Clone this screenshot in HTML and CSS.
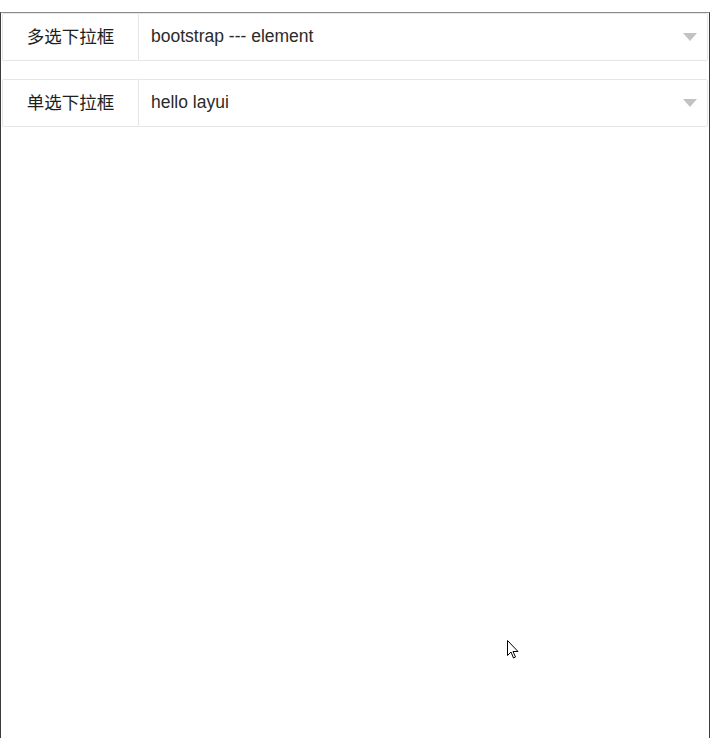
FILE: index.html
```html
<!DOCTYPE html>
<html lang="zh-CN">
<head>
<meta charset="utf-8">
<title>select</title>
<link rel="stylesheet" href="styles.css">
</head>
<body>
<div class="frame">
  <form class="form">
    <div class="item">
      <label class="label">多选下拉框</label>
      <div class="select">
        <span class="value">bootstrap --- element</span>
        <i class="edge"></i>
      </div>
    </div>
    <div class="item">
      <label class="label">单选下拉框</label>
      <div class="select">
        <span class="value">hello layui</span>
        <i class="edge"></i>
      </div>
    </div>
  </form>
  <svg class="cursor" width="13" height="20" viewBox="0 0 13 20" xmlns="http://www.w3.org/2000/svg">
    <path d="M0.5 0.5 L0.5 15.5 L4 12 L6.5 18 L8.5 17 L6 11.5 L11 11.5 Z" fill="#fff" stroke="#000" stroke-width="1" stroke-linejoin="miter"/>
  </svg>
</div>
</body>
</html>
```
FILE: styles.css
```css
html, body {
  margin: 0;
  padding: 0;
  background: #fff;
}
body {
  width: 712px;
  height: 738px;
  overflow: hidden;
  font-family: "Liberation Sans", "Noto Sans CJK SC", sans-serif;
}
.frame {
  position: relative;
  box-sizing: border-box;
  margin-top: 12px;
  width: 710px;
  height: 726px;
  border-top: 1px solid #8a8a8a;
  border-left: 1px solid #3c3c3c;
  border-right: 1px solid #3c3c3c;
  background: #fff;
}
.form {
  display: flex;
  flex-direction: column;
  gap: 18px;
  padding: 0 1px;
}
.item {
  display: flex;
  height: 48px;
}
.label {
  box-sizing: border-box;
  width: 136px;
  padding-bottom: 3px;
  border: 1px solid #e6e6e6;
  border-right: none;
  border-radius: 2px 0 0 2px;
  display: flex;
  align-items: center;
  justify-content: center;
  font-size: 17.5px;
  color: #1e1e1e;
  background: #fff;
}
.select {
  position: relative;
  flex: 1;
  box-sizing: border-box;
  border: 1px solid #e6e6e6;
  border-radius: 0 2px 2px 0;
  display: flex;
  align-items: center;
  padding-left: 12px;
  padding-bottom: 1px;
  font-size: 17.5px;
  color: #2b2b2b;
}
.edge {
  position: absolute;
  right: 10px;
  top: 19px;
  width: 0;
  height: 0;
  border-left: 7.5px solid transparent;
  border-right: 7.5px solid transparent;
  border-top: 8px solid #c2c2c2;
}
.cursor {
  position: absolute;
  left: 506px;
  top: 627px;
}
```
